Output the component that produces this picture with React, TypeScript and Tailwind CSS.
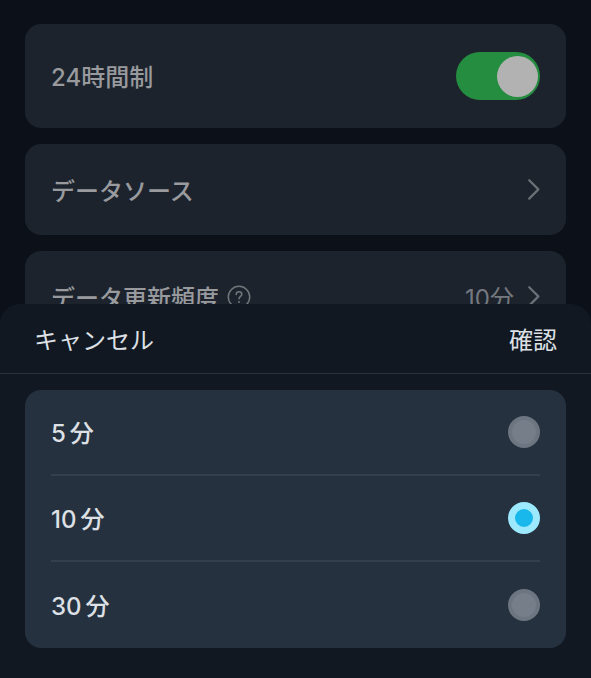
import { useState } from 'react'
import type { ReactNode } from 'react'

const intervals = [5, 10, 30]

function ChevronIcon() {
  return (
    <svg viewBox="0 0 14 24" className="h-6 w-3.5 shrink-0" fill="none" aria-hidden="true">
      <path
        d="M3.2 2.2 L12.4 11.4 L3.2 20.6"
        stroke="#6c7077"
        strokeWidth="2.2"
        strokeLinecap="round"
        strokeLinejoin="round"
      />
    </svg>
  )
}

function HelpIcon() {
  return (
    <svg viewBox="0 0 24 24" className="size-6 shrink-0" fill="none" stroke="#72767b" aria-hidden="true">
      <circle cx="12" cy="12" r="10.7" strokeWidth="1.5" />
      <path
        d="M9.2 9.4c0-1.6 1.2-2.7 2.8-2.7s2.8 1 2.8 2.5c0 2.1-2.8 2.2-2.8 4.6"
        strokeWidth="1.6"
        strokeLinecap="round"
      />
      <circle cx="12" cy="16.9" r="1" fill="#72767b" stroke="none" />
    </svg>
  )
}

function SettingsButton({ label, children }: { label: ReactNode; children: ReactNode }) {
  return (
    <button
      type="button"
      className="flex h-[91px] w-full items-center justify-between rounded-2xl bg-[#1c232d] px-[26px]"
    >
      <span className="flex items-center gap-2 font-medium">{label}</span>
      <span className="flex items-center gap-3 text-[#75797f]">{children}</span>
    </button>
  )
}

export default function App() {
  const [use24Hour, setUse24Hour] = useState(true)
  const [selected, setSelected] = useState(10)

  return (
    <div className="min-h-screen bg-[#0c1019] font-[Inter,'Noto_Sans_CJK_JP',sans-serif] text-2xl text-[#989a9d]">
      <main className="flex flex-col gap-4 px-[25px] pt-6">
        <label className="flex h-[104px] items-center justify-between rounded-2xl bg-[#1c232d] px-[26px] font-medium">
          <span className="pt-1">24時間制</span>
          <input
            type="checkbox"
            role="switch"
            checked={use24Hour}
            onChange={(event) => setUse24Hour(event.target.checked)}
            className="flex h-12 w-[84px] appearance-none items-center rounded-full bg-[#3a424d] px-[2px] before:size-[41px] before:rounded-full before:bg-[#b2b2b2] checked:justify-end checked:bg-[#258d40]"
          />
        </label>
        <SettingsButton label={<span className="pt-1">データソース</span>}>
          <ChevronIcon />
        </SettingsButton>
        <SettingsButton
          label={
            <>
              <span className="pt-1">データ更新頻度</span>
              <HelpIcon />
            </>
          }
        >
          <span className="pt-1">10分</span>
          <ChevronIcon />
        </SettingsButton>
      </main>

      <section
        role="dialog"
        aria-label="データ更新頻度"
        className="fixed inset-x-0 bottom-0 rounded-t-[20px] bg-[#111822] text-[#dde0e5]"
      >
        <header className="flex h-[70px] items-center justify-between border-b border-[#2b323c] px-[34px] pt-1">
          <button type="button">キャンセル</button>
          <button type="button">確認</button>
        </header>
        <div className="px-[25px] pt-4 pb-[30px]">
          <fieldset className="divide-y-2 divide-[#343e4c] rounded-2xl bg-[#263140] px-[26px]">
            {intervals.map((minutes) => (
              <label key={minutes} className="flex h-[86px] items-center justify-between font-medium">
                <span className="flex gap-1 pt-1">
                  <span>{minutes}</span>
                  <span>分</span>
                </span>
                <input
                  type="radio"
                  name="interval"
                  checked={selected === minutes}
                  onChange={() => setSelected(minutes)}
                  className="size-8 appearance-none rounded-full border-4 border-[#6c7580] bg-[#757e89] checked:border-[7px] checked:border-[#9ce9fd] checked:bg-[#18b8ec]"
                />
              </label>
            ))}
          </fieldset>
        </div>
      </section>
    </div>
  )
}
